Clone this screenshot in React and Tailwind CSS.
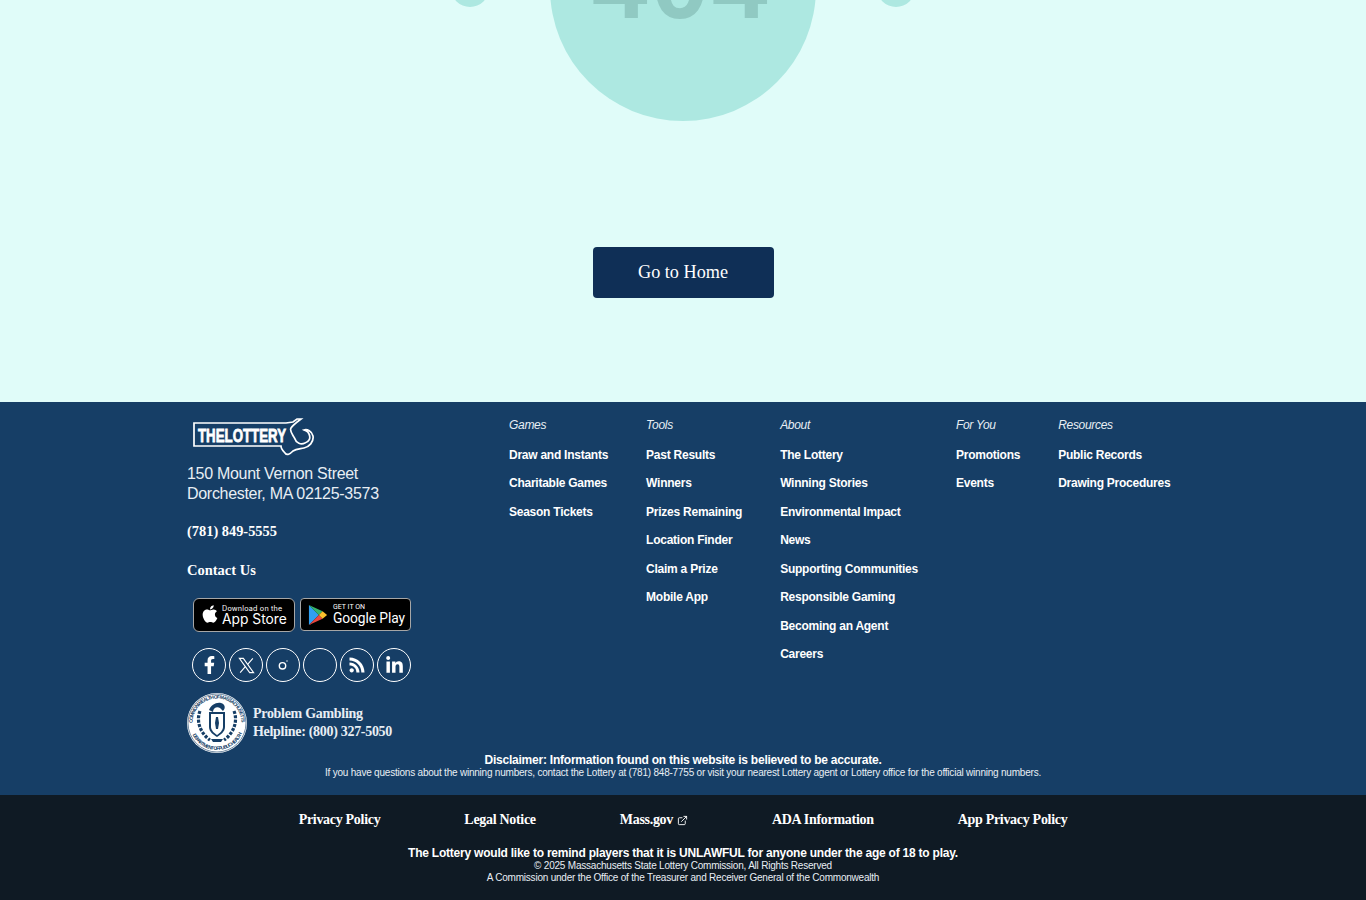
import React from "react";
import { FaFacebookF, FaApple, FaLinkedinIn } from "react-icons/fa";
import { IoLogoRss } from "react-icons/io";
import { FiExternalLink } from "react-icons/fi";

const columns = [
  { title: "Games", links: ["Draw and Instants", "Charitable Games", "Season Tickets"] },
  {
    title: "Tools",
    links: ["Past Results", "Winners", "Prizes Remaining", "Location Finder", "Claim a Prize", "Mobile App"],
  },
  {
    title: "About",
    links: [
      "The Lottery",
      "Winning Stories",
      "Environmental Impact",
      "News",
      "Supporting Communities",
      "Responsible Gaming",
      "Becoming an Agent",
      "Careers",
    ],
  },
  { title: "For You", links: ["Promotions", "Events"] },
  { title: "Resources", links: ["Public Records", "Drawing Procedures"] },
];

const legalLinks = ["Privacy Policy", "Legal Notice", "Mass.gov", "ADA Information", "App Privacy Policy"];

function LotteryLogo() {
  return (
    <svg width="124" height="42" viewBox="0 0 124 42" className="block">
      <path
        d="M1 5 L93 5 L100 4 L104 1 L108 1 C104 4 100 7 98 10 C96 13 100 17 102 21 C103 25 108 27 112 25 C116 24 118 20 116 16 C115 13 113 13 111 12 C114 11 119 13 120 18 C121 24 116 29 111 30 C106 31 103 31 100 33 C97 36 94 38 92 35 C90 33 88 31 88 28 L1 28 Z"
        fill="none"
        stroke="white"
        strokeWidth="1.7"
      />
      <text
        x="5"
        y="24"
        fill="white"
        fontFamily="'Liberation Sans', sans-serif"
        fontWeight="700"
        fontSize="19"
        stroke="white"
        strokeWidth="0.8"
        textLength="88"
        lengthAdjust="spacingAndGlyphs"
      >
        THELOTTERY
      </text>
    </svg>
  );
}

function PlayIcon() {
  return (
    <svg width="20" height="22" viewBox="0 0 22 24">
      <path d="M1 1 L12 12 L1 23 Z" fill="#2f9ff0" />
      <path d="M1 1 L16 8 L12 12 Z" fill="#35b36b" />
      <path d="M1 23 L16 16 L12 12 Z" fill="#e9463f" />
      <path d="M16 8 L21 12 L16 16 L12 12 Z" fill="#fbc02d" />
    </svg>
  );
}

function AppBadges() {
  return (
    <div className="flex gap-[5px] ml-[6px] mt-[18px] items-start">
      <div className="w-[102px] h-[34px] bg-black border border-[#a6a6a6] rounded-[6px] flex items-center pl-[7px] text-white font-['Inter',sans-serif]">
        <FaApple className="w-[18px] h-[20px] mr-[3px] -mt-[2px]" />
        <div className="leading-none pt-[2px]">
          <div className="text-[7.2px] tracking-[0.2px]">Download on the</div>
          <div className="text-[13.8px] mt-[1px]">App Store</div>
        </div>
      </div>
      <div className="w-[111px] h-[33px] bg-black border border-[#a6a6a6] rounded-[4px] flex items-center pl-[7px] text-white font-['Roboto',sans-serif]">
        <PlayIcon />
        <div className="leading-none ml-[5px]">
          <div className="text-[7px]">GET IT ON</div>
          <div className="text-[13.8px] mt-[1px] tracking-[-0.1px]">Google Play</div>
        </div>
      </div>
    </div>
  );
}

function SocialIcons() {
  const circle = "w-[34px] h-[34px] rounded-full border border-white flex items-center justify-center text-white";
  return (
    <div className="flex gap-[3px] ml-[5px] mt-[16px]">
      <div className={circle}>
        <FaFacebookF className="w-[15px] h-[18px]" />
      </div>
      <div className={circle}>
        <svg width="19" height="19" viewBox="0 0 24 24" fill="none" stroke="white" strokeWidth="1.4">
          <path d="M3 3 H8 L21 21 H16 Z" />
          <path d="M20 3 L13.5 10.5 M10.5 13.5 L4 21" />
        </svg>
      </div>
      <div className={circle}>
        <svg width="12" height="12" viewBox="0 0 12 12" fill="none" stroke="white" strokeWidth="1.4">
          <circle cx="5.5" cy="6.8" r="3.2" />
          <circle cx="10" cy="2" r="0.7" fill="white" stroke="none" />
        </svg>
      </div>
      <div className={circle} />
      <div className={circle}>
        <IoLogoRss className="w-[20px] h-[20px]" />
      </div>
      <div className={circle}>
        <FaLinkedinIn className="w-[19px] h-[19px]" />
      </div>
    </div>
  );
}

function Seal() {
  return (
    <svg width="60" height="60" viewBox="0 0 60 60" className="shrink-0">
      <defs>
        <path id="sealTop" d="M5.5 30 A24.5 24.5 0 0 1 54.5 30" />
        <path id="sealBottom" d="M3 30 A27 27 0 0 0 57 30" />
      </defs>
      <circle cx="30" cy="30" r="30" fill="white" />
      <circle cx="30" cy="30" r="29" fill="none" stroke="#163e66" strokeWidth="0.6" />
      <text fontSize="5" fill="#163e66" fontFamily="'Liberation Sans', sans-serif" fontWeight="700">
        <textPath href="#sealTop" textLength="76">COMMONWEALTH OF MASSACHUSETTS</textPath>
      </text>
      <text fontSize="5" fill="#163e66" fontFamily="'Liberation Sans', sans-serif" fontWeight="700">
        <textPath href="#sealBottom" startOffset="12" textLength="62">DEPARTMENT OF PUBLIC HEALTH</textPath>
      </text>
      {/* arm and snake over the shield */}
      <path d="M22 17 C24 12 29 9 34 10 C38 11 39 15 36 18 L33 15 C30 13 26 15 26 19 Z" fill="#163e66" />
      <path d="M22 19 L38 19 L38 34 C38 39 33 42 30 44 C27 42 22 39 22 34 Z" fill="#163e66" />
      <path d="M24 21 L36 21 L36 34 C36 37 33 40 30 42 C27 40 24 37 24 34 Z" fill="white" />
      <path d="M29 24 L31 24 L32 30 L31 36 L29 36 L28 30 Z" fill="#163e66" />
      {/* laurels */}
      <path
        d="M13 18 C9 28 13 40 23 47 M47 18 C51 28 47 40 37 47"
        fill="none"
        stroke="#163e66"
        strokeWidth="3.2"
        strokeDasharray="3 1.4"
      />
      <path d="M24 46 L36 46 L34 49 L26 49 Z" fill="#163e66" />
    </svg>
  );
}

export default function App() {
  return (
    <div className="w-full h-[900px] overflow-hidden font-['Liberation_Sans',Arial,sans-serif] bg-[#e0fcf9]">
      <section className="h-[402px] flex flex-col items-center overflow-hidden">
        <div className="relative w-[266px] h-[266px] -mt-[145px] shrink-0 rounded-full bg-[#ade8e1] flex justify-center">
          <span className="mt-[87px] pr-[6px] text-[100px] leading-[100px] font-bold text-[#90c9c2] font-['Liberation_Mono',monospace]">
            404
          </span>
          <span className="absolute left-[-99px] top-[114px] w-[38px] h-[38px] rounded-full bg-[#ade8e1]" />
          <span className="absolute right-[-99px] top-[114px] w-[38px] h-[38px] rounded-full bg-[#ade8e1]" />
        </div>
        <button className="mt-[126px] w-[181px] h-[51px] rounded-[4px] bg-[#0f2f56] text-white text-[18.2px] font-['Liberation_Serif',serif]">
          Go to Home
        </button>
      </section>

      <footer className="h-[393px] bg-[#163e66] text-white pt-[16px] relative">
        <div className="flex pl-[187px]">
          <div className="w-[322px] shrink-0">
            <div className="ml-[6px]">
              <LotteryLogo />
            </div>
            <div className="mt-[4px] text-[16px] leading-[20px] text-[#e8eef4] tracking-[-0.3px]">
              <div>150 Mount Vernon Street</div>
              <div>Dorchester, MA 02125-3573</div>
            </div>
            <div className="mt-[16.5px] text-[14.4px] leading-[20px] font-bold font-['Liberation_Serif',serif]">
              (781) 849-5555
            </div>
            <div className="mt-[19.5px] text-[14.5px] leading-[20px] font-bold font-['Liberation_Serif',serif]">
              Contact Us
            </div>
            <AppBadges />
            <SocialIcons />
            <div className="flex items-center gap-[6px] mt-[11px]">
              <Seal />
              <div className="text-[14px] leading-[18px] font-bold font-['Liberation_Serif',serif] tracking-[-0.3px] text-[#e8eef4]">
                <div>Problem Gambling</div>
                <div>Helpline: (800) 327-5050</div>
              </div>
            </div>
          </div>
          <div className="flex gap-[38px] items-start">
            {columns.map((col) => (
              <div key={col.title}>
                <div className="text-[12px] leading-[14px] italic tracking-[-0.3px] text-[#e8eef4]">{col.title}</div>
                <div className="mt-[8.5px]">
                  {col.links.map((link) => (
                    <div key={link} className="h-[28.5px] flex items-center text-[12px] font-bold tracking-[-0.25px] whitespace-nowrap">
                      {link}
                    </div>
                  ))}
                </div>
              </div>
            ))}
          </div>
        </div>
        <div className="absolute left-0 right-0 top-[352px] text-center">
          <div className="text-[12px] leading-[13px] font-bold tracking-[-0.225px]">
            Disclaimer: Information found on this website is believed to be accurate.
          </div>
          <div className="text-[10px] leading-[12px] tracking-[-0.215px] text-[#e8eef4]">
            If you have questions about the winning numbers, contact the Lottery at (781) 848-7755 or visit your nearest Lottery agent or Lottery office for the official winning numbers.
          </div>
        </div>
      </footer>

      <div className="h-[105px] bg-[#0f1a24] text-white pt-[16px]">
        <div className="flex justify-center gap-[84px] text-[14px] leading-[18px] font-bold font-['Liberation_Serif',serif] tracking-[-0.3px]">
          {legalLinks.map((link) => (
            <div key={link} className="flex items-center gap-[4px]">
              {link}
              {link === "Mass.gov" && <FiExternalLink className="w-[11px] h-[11px]" />}
            </div>
          ))}
        </div>
        <div className="mt-[18px] text-center">
          <div className="text-[12px] leading-[13px] font-bold tracking-[-0.225px]">
            The Lottery would like to remind players that it is UNLAWFUL for anyone under the age of 18 to play.
          </div>
          <div className="text-[10px] leading-[12px] tracking-[-0.215px] text-[#e8eef4]">© 2025 Massachusetts State Lottery Commission, All Rights Reserved</div>
          <div className="text-[10px] leading-[12px] tracking-[-0.215px] text-[#e8eef4]">
            A Commission under the Office of the Treasurer and Receiver General of the Commonwealth
          </div>
        </div>
      </div>
    </div>
  );
}
